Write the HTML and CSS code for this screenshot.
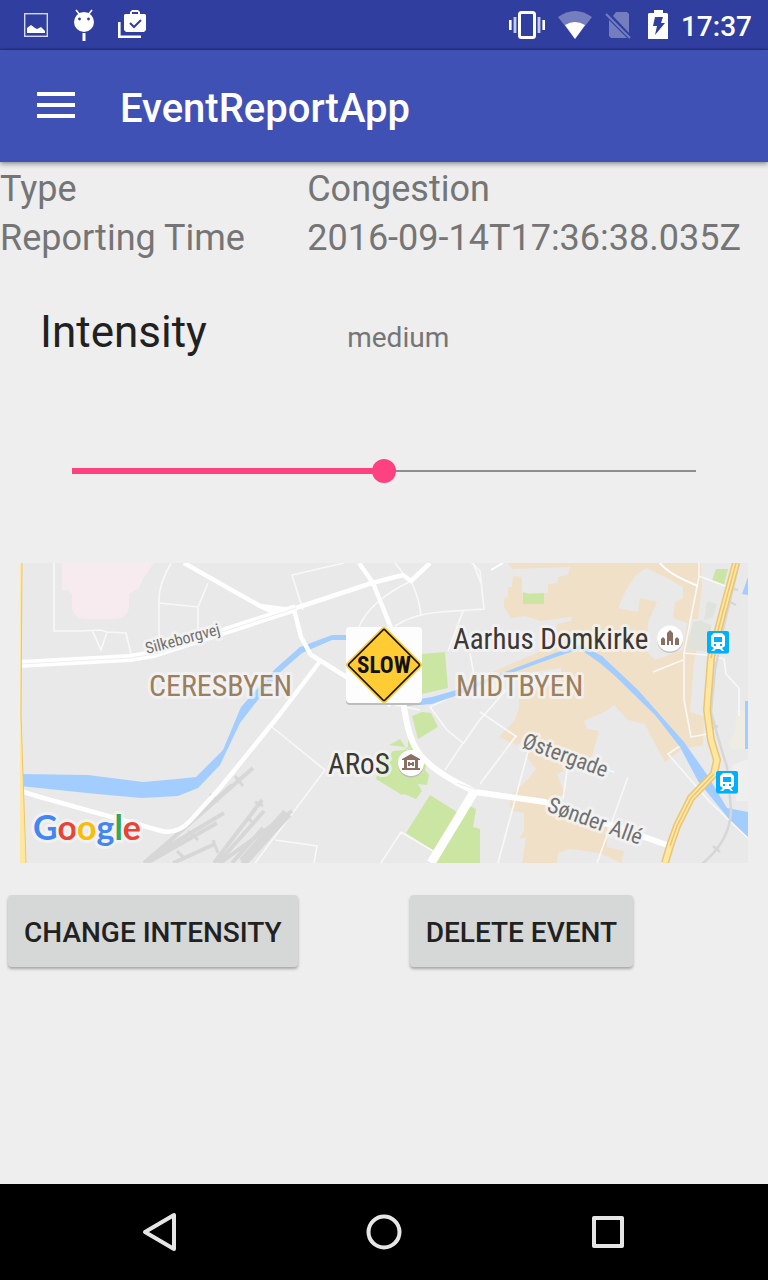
FILE: index.html
```html
<!DOCTYPE html>
<html lang="en">
<head>
<meta charset="utf-8">
<meta name="viewport" content="width=device-width, initial-scale=1">
<title>EventReportApp</title>
<link rel="stylesheet" href="styles.css">
</head>
<body>
<div class="status-bar">
  <div class="status-group notifications">
    <svg width="24" height="24" viewBox="0 0 24 24"><rect x=".7" y=".7" width="22.6" height="22.6" fill="none" stroke="#d3d7ec" stroke-width="1.4"/><path d="M3 20v-5l4-3 4 3 2 1 4-2 4 4v2z" fill="#fff"/></svg>
    <svg width="22" height="32" viewBox="0 0 22 32"><circle cx="12" cy="13" r="10" fill="#fff"/><path d="m4 1 4 5m12-5-4 5" stroke="#fff" stroke-width="1.6"/><path d="M12 24v8" stroke="#fff" stroke-width="3"/><circle cx="7.500" cy="10" r="1.400" fill="#303f9f"/><circle cx="16.500" cy="10" r="1.400" fill="#303f9f"/></svg>
    <svg width="28" height="28" viewBox="0 0 28 28"><path d="M1.300 11v14.700H23" fill="none" stroke="#fff" stroke-width="2.600"/><path fill="#fff" fill-rule="evenodd" d="M7 3h5V1l2-2h6l2 2v2h5l1 1v15l-2 2H8l-2-2V4zm7 0h6V1h-6z"/><path d="m12 12 4 4 7-7" fill="none" stroke="#303f9f" stroke-width="2"/></svg>
  </div>
  <div class="status-group indicators">
    <svg width="36" height="28" viewBox="0 0 36 28"><rect x="10.500" y="1.500" width="15" height="25" rx="2" fill="none" stroke="#fff" stroke-width="3"/><path d="M1.300 9v10m33.400-10v10" stroke="#fff" stroke-width="2.600"/><path d="M6 6v16M30 6v16" stroke="#c5cae9" stroke-width="2.800"/></svg>
    <svg width="34" height="28" viewBox="0 0 34 28"><path d="M17 28 0 6q17-12 34 0z" fill="#747dbd"/><path d="M17 28 7 14q10-6 20 0z" fill="#fff"/></svg>
    <svg width="30" height="28" viewBox="0 0 30 28"><path d="M11 1h11l2 2v19L8 5zM4 9l18 18H6l-2-2z" fill="#747dbd"/><path d="m1 3 24 24" stroke="#747dbd" stroke-width="2"/></svg>
    <svg width="20" height="30" viewBox="0 0 20 30"><path d="M1 3h5V0h9v3h4l1 1v25H0V4z" fill="#fff"/><path d="M7 7h8l-2 6h4L7 25l2-9H5z" fill="#303f9f"/></svg>
    <time class="clock">17:37</time>
  </div>
</div>
<header class="toolbar">
  <button class="menu-button" type="button" aria-label="Open menu"><svg width="38" height="26" viewBox="0 0 38 26"><path d="M0 2h38M0 13h38M0 24h38" stroke="#fff" stroke-width="4"/></svg></button>
  <h1 class="title">EventReportApp</h1>
</header>
<main class="content">
  <dl class="details">
    <dt>Type</dt><dd>Congestion</dd>
    <dt>Reporting Time</dt><dd>2016-09-14T17:36:38.035Z</dd>
  </dl>
  <div class="intensity">
    <label class="intensity-label" for="intensity">Intensity</label>
    <output class="intensity-value" for="intensity">medium</output>
  </div>
  <div class="slider-row"><input class="slider" id="intensity" type="range" min="0" max="2" value="1"></div>
  <svg class="map" viewBox="20 563 728 300" role="img" aria-label="Map of the event location">
    <rect x="20" y="563" width="728" height="300" fill="#e9e9e9"/>
    <path fill="#f8ebf0" d="M62 563v27h6l4 4v14q2 10 12 11h32q11-1 13-11V594l10-6 5-11 10-14z"/>
    <g fill="#f0e0c8">
      <path fill-rule="evenodd" d="M508 563l4 6 58-2-2 8-10 2-1 6-9 1v9h-26v-16l-9-1-1 11h-4v10l-4 1v9l7 11 14-2 15 5 32-4-1 4-14 3-2 21-65 28 1 6 70-11v8l-20 15-22 2v15l-4 12-16 17 17 8 14-6-4 17 10 13-8 10-16 15-3 11 4 6 11 2v18l-5 8 7-2-4 26h35l1-10 12-4 30 4 21 10 3-12-17-4v-20l-15-5h-25l-15-23 13-5-8-20 35-18 7-25-12-2-3-8 22-10 8-6 14 15 17 4 10 20 10 18 17-13 21-4 1-28-14-5 4-50 3-13h-8v-30h9l4-34-1-23h23v-2zM646 568l21 10 16 9v11l-8 4-2 16 14 5-4 27-28 10-8-8 1-30 9-20-17-4-2 14-20-4 8-18 10-15z"/>
    </g>
    <path fill="#e0e3dc" d="M707 601l10 3-4 13-11 4 9 4v27l-24-3 6-27 11-2z"/>
    <path fill="#efede3" d="M737 711h9l1 38-15 1-3-8 6-10z"/>
    <path fill="#efefef" d="M732 765l16-6v42h-12z"/>
    <g fill="#cbe6a3"><path d="M523 592l6 2 15-1v11h-21zM716 569h12l-4 16-12-5zM422 654l23-2 3 36-26 6zM412 716l10-4 9 1 7 14-20 12zM389 756l4-5 10-1 8-2-22-3 11-6 8 12v-18l20 28-3 9 4 5-2 10-9-1 4 7-6 8-12-5-2 1-26-16 7-28zM430 795l27 17-23 39-28-18zM470 806l6 3-3 18 7 2v34h-47l29-49z"/></g>
    <g fill="none" stroke="#f8f8f8" stroke-width="1.600">
      <path d="M54 563v68h27l20-1 6 2 19 1 5 21M92 630l9 20 6-18M171 563q-13 22-12 40v35M159 603l39 4 10-24M198 607v28M344 563l-52 12 11 35M473 563l8 20M395 563l8 10M411 581q8 16 10 35M411 581q-42 20-53 48M395 626q18-12 45-14l44-3-4-38-10-10M463 611l-15 40M470 653l5 28M272 727l53 43-70 93M450 697l-20 10 17 23 16 13-18 27M506 690l-28 32-15 22M480 712l37 25M516 736l-36 48M533 733l-35 130M395 705l25 5M614 772l-45-15-6 42M628 777l-31 86M275 840l42 6-3 17M381 863l20-31 32 19M699 563v14l-6 30-9 46v47l7 37 16-3M699 576l29 11M683 653l24 2 17 4 2 15 13 14v28M683 660l-30 12M680 746l-12 8 42 48 38 36"/>
    </g>
    <path d="M660 563q8 11 38 23M491 570l12-7" fill="none" stroke="#fff" stroke-width="2"/>
    <path fill="#a3cdff" d="M20 774l68 1 55 7 34-3 19-2 27-27 18-43 34-38 25-22 32-12h14v5h-14l-30 13-24 21-38 49-20 42-22 23-20 8-36 2-45-4-77-8zM407 701L432 697 460 689 555 653 580 645 602 656 638 690 684 742 708 776 727 808 748 812V837L728 818 698 781 680 747 655 715 615 676 600 663 580 649 556 657 495 679 458 695 432 704 407 706zM742 594l6-17v18zM745 701h3v48h-3z"/>
    <g fill="none" stroke="#d7d7d7">
      <path stroke-width="4" d="M253 768l-73 64-36 31M232 785l-80 72M224 813l-70 42M217 823l-70 40M215 844l-42 19M262 800l-48 63M264 811l-46 52M263 828l-31 35M292 811l-72 52M290 815l-48 48"/>
      <path stroke-width="10" d="M287 813l-44 49"/>
      <path stroke-width="3" d="M235 776l8 10M210 794l8 8M188 831l10 9M213 840l5 13M177 851l8 8M255 802l8 4M247 817l5 5"/>
      <path stroke-width="2.500" d="M739 563l-15 62-9 45-4 42q8 30 16 55l4 42q0 31-29 55M730 588l8 2M728 601l8 4M708 664l8 2M710 729l8-3M713 846l7 6"/>
    </g>
    <g fill="none" stroke="#fff" stroke-linejoin="round">
      <path stroke-width="8" d="M20 664l110-6 24-4 142-46"/>
      <path stroke-width="4.500" d="M296 608l76-25 31-8 8 6 19-18M184 563l76 43 17 8M260 606l30 4M359 563l14 20 22 55M294 609l7 28 10 18 10 6 70 44M321 660l-41 54-60 74-30 33q-14 15-32 9L40 797l-20-6"/>
      <path stroke-width="6" d="M403 700q5 38 14 50 10 16 37 31l21 11 70 10 122 43"/>
      <path stroke-width="9" d="M474 792l-43 71"/>
    </g>
    <path d="M20 664l110-6 24-4 142-46M457 783l20 7" fill="none" stroke="#eee" stroke-width="1"/>
    <g fill="none" stroke-linejoin="round">
      <path d="M736 563l-14 52-11 43-4 52 4 30 6 20-3 14-23 24-14 28-7 20-5 17" stroke="#e8c577" stroke-width="8"/>
      <path d="M736 563l-14 52-11 43-4 52 4 30 6 20-3 14-23 24-14 28-7 20-5 17" stroke="#ffe7a0" stroke-width="5"/>
      <path d="M736 563l-14 52-11 43M714 774l-23 24-14 28-7 20" stroke="#e8c577" stroke-width="1.500"/>
    </g>
    <path d="M20 563h2l-1 152 5 148h-6z" fill="#ffe7a0"/><path d="M22 563l-1 152 5 148" fill="none" stroke="#e8c577"/>
    <g class="map-text">
      <text class="road-label small" transform="translate(147 654) rotate(-15)">Silkeborgvej</text>
      <text class="area-label" x="149" y="696">CERESBYEN</text>
      <text class="area-label" x="456" y="696">MIDTBYEN</text>
      <text class="place-label" x="453" y="649">Aarhus Domkirke</text>
      <text class="place-label" x="328" y="774">ARoS</text>
      <text class="road-label" transform="translate(521 747) rotate(20)">Østergade</text>
      <text class="road-label" transform="translate(546 811) rotate(20)">Sønder Allé</text>
      <text class="logo" x="33" y="840"><tspan fill="#4285f4">G</tspan><tspan fill="#ea4335">o</tspan><tspan fill="#fbbc05">o</tspan><tspan fill="#4285f4">g</tspan><tspan fill="#34a853">l</tspan><tspan fill="#ea4335">e</tspan></text>
    </g>
    <circle cx="670" cy="640" r="13" fill="#c8c4c0"/><circle cx="670" cy="638.500" r="13" fill="#fff"/>
    <path fill="#8d6e63" d="M661 645v-6l2-2 2 2v6zM667 645v-12l3-3 3 3v12h-2v-4h-2v4zM675 645v-6l2-2 2 2v6z"/>
    <circle cx="411" cy="764.500" r="13" fill="#bdbdb5"/><circle cx="411" cy="763" r="13" fill="#fff"/>
    <path fill="#8d6e63" d="M402 759l9-5 9 5v1h-18zM404 760h3v8h8v-8h3v8h2v2h-18v-2h2zM408 762h2v1h2v-1h2v4h-2v-1h-2v1h-2z"/>
    <g id="station"><rect x="707" y="632" width="22" height="22" rx="2" fill="#9bb"/><rect x="707" y="631" width="22" height="22" rx="2" fill="#00b0ff"/><path fill="#fff" fill-rule="evenodd" d="M714 633h8l3 3v10l-3 2 2 3h-2l-2-2h-4l-2 2h-3l3-3-3-2v-10zm0 4v5h8v-5zm0 7v2h2v-2zm6 0v2h2v-2z"/></g>
    <use href="#station" x="9" y="140"/>
    <rect x="346" y="629" width="76" height="76" rx="4" fill="#bdbdbd"/><rect x="346" y="627" width="76" height="76" rx="4" fill="#fdfdfd"/>
    <path d="M382 629q2-2 4 0l34 34q2 2 0 4l-34 34q-2 2-4 0l-34-34q-2-2 0-4z" fill="#fc3" stroke="#fc3" stroke-width="2"/>
    <path d="M383 630q1-1 2 0l34 34q1 1 0 2l-34 34q-1 1-2 0l-34-34q-1-1 0-2z" fill="#fc3" stroke="#111" stroke-width="1.700"/>
    <text class="sign-label" x="384" y="673" text-anchor="middle">SLOW</text>
  </svg>
  <div class="actions">
    <button class="action" type="button">CHANGE INTENSITY</button>
    <button class="action" type="button">DELETE EVENT</button>
  </div>
</main>
<nav class="system-nav" aria-label="System navigation">
  <button class="nav-button" type="button" aria-label="Back"><svg width="40" height="40" viewBox="0 0 40 40"><path d="M34 3v34L5 20z"/></svg></button>
  <button class="nav-button" type="button" aria-label="Home"><svg width="40" height="40" viewBox="0 0 40 40"><circle cx="20" cy="20" r="15.500"/></svg></button>
  <button class="nav-button" type="button" aria-label="Recent apps"><svg width="40" height="40" viewBox="0 0 40 40"><rect x="6" y="6" width="28" height="28"/></svg></button>
</nav>
</body>
</html>
```
FILE: styles.css
```css
* { box-sizing: border-box; }

body {
  margin: 0;
  min-height: 100vh;
  display: flex;
  flex-direction: column;
  background: #eeeeee;
  font-family: Roboto, "Noto Sans", sans-serif;
}

button {
  border: 0;
  font: inherit;
}

svg {
  display: block;
  overflow: visible;
}

.status-bar {
  height: 50px;
  padding: 0 16px 0 24px;
  display: flex;
  align-items: center;
  justify-content: space-between;
  background: #303f9f;
  color: #fff;
}

.status-group {
  display: flex;
  align-items: center;
}

.notifications { gap: 24px; }

.indicators { gap: 13px; }

.clock {
  padding-top: 4px;
  font-size: 28px;
  font-weight: 500;
  line-height: 32px;
}

.toolbar {
  height: 112px;
  padding: 0 32px;
  display: flex;
  align-items: center;
  gap: 40px;
  background: #3f51b5;
  color: #fff;
  box-shadow: 0 -1px 2px rgba(0, 0, 0, .3), 0 2px 5px rgba(0, 0, 0, .4);
}

.menu-button {
  padding: 4px 5px 6px;
  background: none;
}

.title {
  margin: 0;
  padding-top: 6px;
  font-size: 40px;
  font-weight: 500;
  line-height: 48px;
}

.content {
  flex: 1;
  padding-top: 3px;
}

.details {
  margin: 0;
  display: grid;
  grid-template-columns: 2fr 3fr;
  color: #757575;
  font-size: 36px;
  line-height: 49px;
}

.details dd { margin: 0; }

.intensity {
  margin-top: 43px;
  display: grid;
  grid-template-columns: 2fr 3fr;
  align-items: baseline;
  line-height: 52px;
}

.intensity-label {
  padding-left: 40px;
  color: #212121;
  font-size: 44px;
}

.intensity-value {
  padding-left: 40px;
  color: #757575;
  font-size: 28px;
}

.slider-row {
  padding: 95px 72px 80px;
}

.slider {
  appearance: none;
  display: block;
  width: 100%;
  height: 24px;
  margin: 0;
  background:
    linear-gradient(#ff4081, #ff4081) left center / 50% 6px no-repeat,
    linear-gradient(#8e8e8e, #8e8e8e) center / 100% 2px no-repeat;
}

.slider::-webkit-slider-thumb {
  appearance: none;
  width: 24px;
  height: 24px;
  border-radius: 50%;
  background: #ff4081;
}

.map {
  width: calc(100% - 40px);
  margin: 0 20px;
  overflow: hidden;
}

.map-text text {
  paint-order: stroke;
  stroke: rgba(245, 245, 245, .7);
  stroke-width: 6px;
  stroke-linejoin: round;
}

.area-label, .place-label, .road-label {
  font-family: "Roboto Condensed", Roboto, sans-serif;
}

.area-label {
  font-size: 30px;
  fill: #9c7f5c;
}

.place-label {
  font-size: 29px;
  fill: #3c3835;
}

.road-label {
  font-size: 22px;
  fill: #707070;
}

.road-label.small { font-size: 16px; }

.logo {
  font-family: Lato, sans-serif;
  font-size: 34px;
  font-weight: 700;
}

.sign-label {
  font-family: "Roboto Condensed", "Liberation Sans Narrow", Roboto, sans-serif;
  font-size: 23px;
  font-weight: 700;
  fill: #111;
}

.actions {
  padding: 32px 8px;
  display: flex;
  flex-wrap: wrap;
  gap: 16px 112px;
}

.action {
  height: 72px;
  padding: 2px 16px 0;
  border-radius: 4px;
  background: #d6d7d7;
  box-shadow: 0 2px 3px rgba(0, 0, 0, .3);
  color: #212121;
  font-size: 28px;
  font-weight: 500;
}

.system-nav {
  height: 96px;
  padding: 0 48px;
  display: flex;
  align-items: center;
  background: #000;
}

.nav-button {
  flex: 1;
  padding: 0;
  display: flex;
  justify-content: center;
  background: none;
}

.nav-button svg {
  fill: none;
  stroke: #e6e6e6;
  stroke-width: 4;
  stroke-linejoin: round;
}
```
